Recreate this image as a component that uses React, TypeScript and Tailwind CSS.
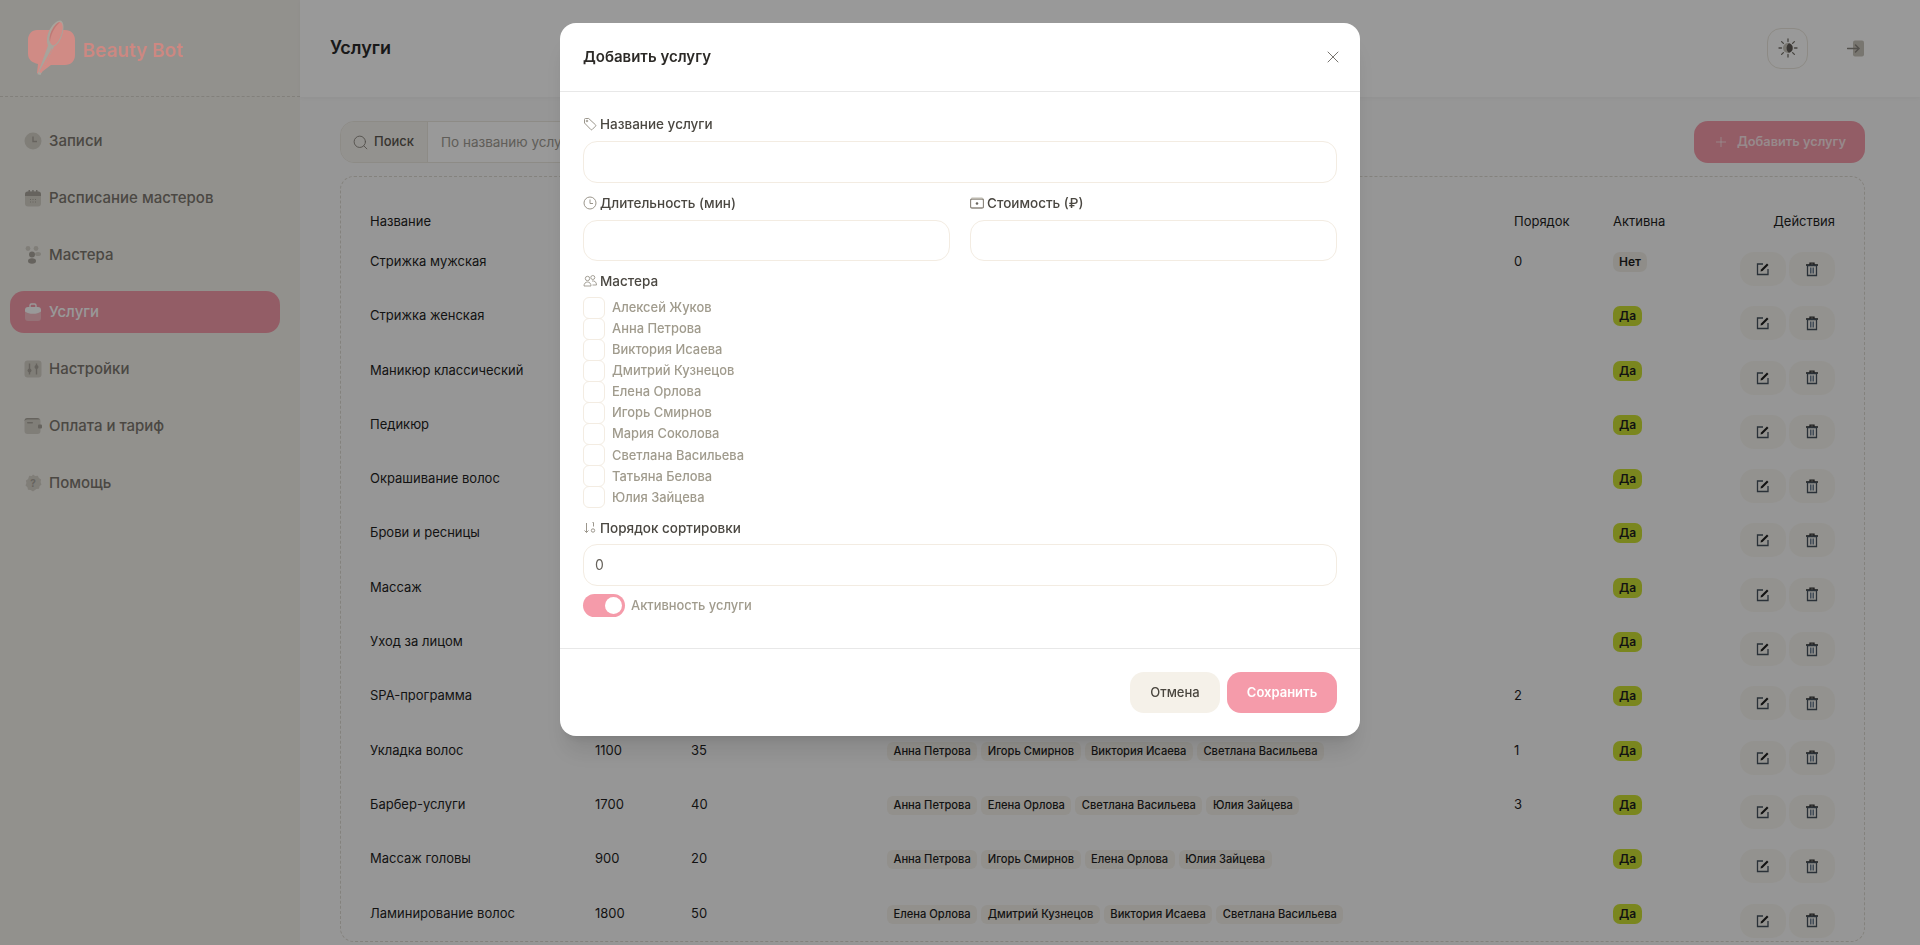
import type { ReactNode } from "react";
import { Plus, Search, X } from "lucide-react";

const font = { fontFamily: "Inter, 'Noto Sans', sans-serif" };

type Row = {
  name: string;
  price?: string;
  time?: string;
  masters?: string[];
  order?: string;
  active: boolean;
};

// первые строки закрыты модалкой, поэтому у них только видимые колонки
const rows: Row[] = [
  { name: "Стрижка мужская", order: "0", active: false },
  { name: "Стрижка женская", active: true },
  { name: "Маникюр классический", active: true },
  { name: "Педикюр", active: true },
  { name: "Окрашивание волос", active: true },
  { name: "Брови и ресницы", active: true },
  { name: "Массаж", active: true },
  { name: "Уход за лицом", active: true },
  { name: "SPA-программа", order: "2", active: true },
  { name: "Укладка волос", price: "1100", time: "35", masters: ["Анна Петрова", "Игорь Смирнов", "Виктория Исаева", "Светлана Васильева"], order: "1", active: true },
  { name: "Барбер-услуги", price: "1700", time: "40", masters: ["Анна Петрова", "Елена Орлова", "Светлана Васильева", "Юлия Зайцева"], order: "3", active: true },
  { name: "Массаж головы", price: "900", time: "20", masters: ["Анна Петрова", "Игорь Смирнов", "Елена Орлова", "Юлия Зайцева"], active: true },
  { name: "Ламинирование волос", price: "1800", time: "50", masters: ["Елена Орлова", "Дмитрий Кузнецов", "Виктория Исаева", "Светлана Васильева"], active: true },
];

const masterNames = [
  "Алексей Жуков",
  "Анна Петрова",
  "Виктория Исаева",
  "Дмитрий Кузнецов",
  "Елена Орлова",
  "Игорь Смирнов",
  "Мария Соколова",
  "Светлана Васильева",
  "Татьяна Белова",
  "Юлия Зайцева",
];

const NavIcon = ({ name, active }: { name: string; active?: boolean }) => {
  const a = active ? "#ffffff" : "#aaa69d";
  const b = active ? "#ffffff" : "#d6d2c9";
  if (name === "clock")
    return (
      <svg width="18" height="18" viewBox="0 0 18 18">
        <circle cx="9" cy="9" r="8.5" fill={b} />
        <path d="M9 4.5V9.5H13" fill="none" stroke={a} strokeWidth="1.4" />
      </svg>
    );
  if (name === "calendar")
    return (
      <svg width="18" height="18" viewBox="0 0 18 18">
        <rect x="1" y="2.5" width="16" height="15" rx="3" fill={b} />
        <path d="M1 7V5.5a3 3 0 0 1 3-3h10a3 3 0 0 1 3 3V7z" fill={a} />
        <rect x="4.5" y="1" width="1.5" height="3" fill={a} />
        <rect x="8.2" y="1" width="1.5" height="3" fill={a} />
        <rect x="12" y="1" width="1.5" height="3" fill={a} />
        <path d="M6 10.5h1M8.5 10.5h1M11 10.5h1M6 13h1M8.5 13h1M11 13h1" stroke={a} strokeWidth="1" />
      </svg>
    );
  if (name === "users")
    return (
      <svg width="18" height="18" viewBox="0 0 18 18">
        <circle cx="4" cy="2.5" r="2.4" fill={b} />
        <circle cx="12" cy="2.5" r="2.4" fill={b} />
        <ellipse cx="14" cy="8" rx="3" ry="2" fill={b} />
        <circle cx="8" cy="8.5" r="3" fill={a} />
        <ellipse cx="8" cy="15" rx="4" ry="2.8" fill={a} />
      </svg>
    );
  if (name === "bag")
    return (
      <svg width="18" height="18" viewBox="0 0 18 18">
        <rect x="1" y="5" width="16" height="13" rx="3" fill={a} opacity="0.35" />
        <path d="M1 7a3 3 0 0 1 3-3h10a3 3 0 0 1 3 3v1.5c-2 1.5-5 2.3-8 2.3s-6-.8-8-2.3z" fill={a} />
        <path d="M6 4V2.5A1.5 1.5 0 0 1 7.5 1h3A1.5 1.5 0 0 1 12 2.5V4" fill="none" stroke={a} strokeWidth="1.4" />
      </svg>
    );
  if (name === "sliders")
    return (
      <svg width="18" height="18" viewBox="0 0 18 18">
        <rect x="0.5" y="0.5" width="17" height="17" rx="3" fill={b} />
        <path d="M5.5 3.5v11M12.5 3.5v11" stroke={a} strokeWidth="1.4" />
        <circle cx="5.5" cy="10.5" r="2" fill={a} />
        <circle cx="12.5" cy="7" r="2" fill={a} />
      </svg>
    );
  if (name === "wallet")
    return (
      <svg width="18" height="18" viewBox="0 0 18 18">
        <rect x="0.5" y="1" width="16" height="16" rx="3" fill={b} />
        <rect x="3" y="5" width="6" height="1.4" rx="0.7" fill={a} />
        <rect x="14" y="7.5" width="4" height="4" rx="1" fill={a} />
        <path d="M0.5 4a3 3 0 0 1 3-3h10a3 3 0 0 1 2.5 1.5H3.5a3 3 0 0 0-3 1.5z" fill={a} />
      </svg>
    );
  return (
    <svg width="18" height="18" viewBox="0 0 18 18">
      <path d="M9 .5l2.2 1.4 2.6-.2 1.1 2.4 2.2 1.3-.5 2.6.9 2.4-1.9 1.8-.6 2.6-2.6.3L9 17.5l-2.4-1.4-2.6-.3-.6-2.6-1.9-1.8.9-2.4-.5-2.6 2.2-1.3L5.2 1.7l2.6.2z" fill={b} />
      <text x="9" y="13" textAnchor="middle" fontSize="10" fontWeight="700" fill={a} style={font}>?</text>
    </svg>
  );
};

const navItems = [
  { label: "Записи", icon: "clock" },
  { label: "Расписание мастеров", icon: "calendar" },
  { label: "Мастера", icon: "users" },
  { label: "Услуги", icon: "bag", active: true },
  { label: "Настройки", icon: "sliders" },
  { label: "Оплата и тариф", icon: "wallet" },
  { label: "Помощь", icon: "help" },
];

// логотип: облачко-сообщение и кисть поверх него
const Logo = () => (
  <svg width="50" height="56" viewBox="0 0 50 56" className="shrink-0">
    <path
      d="M10 10h28c6 0 10 4 10 10v15c0 6-4 10-10 10H24l-12 9-2-1 1-9c-5-1-10-4-10-10V20c0-6 4-10 9-10z"
      fill="#d08b85"
    />
    <path d="M33 .5c3.500 0 4.500 7 2.500 13.500-2 6.500-4.500 10.500-8.500 12.500L13.500 55l-3-.8L21 25.500c-2-4.500-1-10.500 1.500-15.500C25 5 29.500.5 33 .5z" fill="#a8a49c" />
    <path d="M33 2c3 .5 3.500 6 1.500 12-2 6-4.500 10-8 11.500-4-1-5-6-3-12C25.500 7.500 30 2 33 2z" fill="#d08b85" />
    <path d="M33 2c-3 0-7.500 5.500-9.500 11.500-1 3-1.200 6-.5 8 .5-6 4-14 10-19.500z" fill="#bd7a76" />
    <path d="M25 28L12 52l2.500 1 10.500-23z" fill="#d08b85" />
  </svg>
);

const Sidebar = () => (
  <aside className="w-[300px] shrink-0 bg-[#f4f2ec] flex flex-col">
    <div className="h-[97px] shrink-0 border-b border-dashed border-[#d9d6ce] pl-[27px] flex items-center">
      <div className="relative z-[60] flex items-center gap-[6px]">
        <Logo />
        <span className="text-[19px] font-semibold text-[#cd8882] mt-[6px]">Beauty Bot</span>
      </div>
    </div>
    <nav className="flex flex-col gap-[15px] pl-[10px] pr-[20px] pt-[23px]">
      {navItems.map((item) => (
        <div
          key={item.label}
          className={
            item.active
              ? "h-[42px] rounded-[14px] bg-[#f59baa] text-white font-medium flex items-center gap-[7px] pl-[14px] text-[15px]"
              : "h-[42px] rounded-[14px] text-[#7d7870] font-medium flex items-center gap-[7px] pl-[14px] text-[15px]"
          }
        >
          <NavIcon name={item.icon} active={item.active} />
          <span>{item.label}</span>
        </div>
      ))}
    </nav>
  </aside>
);

const ThemeIcon = () => (
  <svg width="20" height="20" viewBox="0 0 20 20">
    <path d="M10 1v2.500M10 16.500V19M1 10h2.500M16.500 10H19M3.600 3.600l1.800 1.800M14.600 14.600l1.800 1.800M3.600 16.400l1.800-1.800M14.600 5.400l1.800-1.800" stroke="#77736b" strokeWidth="1.300" strokeLinecap="round" />
    <circle cx="10" cy="10" r="5" fill="#c9c5bb" />
    <path d="M11 5.200a5 5 0 0 1 0 9.600c-1.600-1-2.400-2.900-2.400-4.800s.8-3.800 2.400-4.800z" fill="#5f5b55" />
  </svg>
);

const LogoutIcon = () => (
  <svg width="17" height="17" viewBox="0 0 17 17">
    <rect x="6" y="0.500" width="11" height="16" rx="2" fill="#c9c5bb" />
    <path d="M0.500 8.500h11M8.500 5L12 8.500 8.500 12" fill="none" stroke="#8b8780" strokeWidth="1.500" strokeLinecap="round" />
  </svg>
);

const Header = () => (
  <header className="h-[97px] shrink-0 bg-white flex items-center justify-between pl-[30px] pr-[56px] shadow-[0_1px_4px_rgba(0,0,0,0.04)]">
    <h1 className="text-[18px] font-semibold text-[#2a2a2a] -mt-[2px]">Услуги</h1>
    <div className="flex items-center gap-[39px] -mt-[1px]">
      <button className="w-[41px] h-[41px] rounded-[14px] border border-[#ebe7de] flex items-center justify-center">
        <ThemeIcon />
      </button>
      <LogoutIcon />
    </div>
  </header>
);

const Toolbar = () => (
  <div className="flex items-center justify-between">
    <div className="flex h-[42px] w-[760px] rounded-[14px] border border-[#ebe8df] overflow-hidden text-[13.500px]">
      <div className="w-[87px] bg-[#f5f3ee] border-r border-[#ebe8df] flex items-center gap-[5px] pl-[11px] font-medium text-[13px] text-[#5c5850]">
        <Search size={17} strokeWidth={1.300} className="text-[#8b8780]" />
        Поиск
      </div>
      <div className="flex-1 bg-white flex items-center pl-[13px] text-[#a09c94]">По названию услуги</div>
    </div>
    <button className="w-[171px] h-[42px] rounded-[14px] bg-[#f59baa] text-white/75 font-semibold text-[12.800px] flex items-center justify-center gap-[8px]">
      <Plus size={16} strokeWidth={1.300} />
      Добавить услугу
    </button>
  </div>
);

const EditIcon = () => (
  <svg width="14" height="14" viewBox="0 0 14 14">
    <path d="M7 2H1.500v10.500H12V7" fill="none" stroke="#46525e" strokeWidth="1.300" />
    <path d="M5 7.500L11 1.500l1.500 1.500-6 6L4.500 9.500z" fill="#1f1f1f" />
  </svg>
);

const TrashIcon = () => (
  <svg width="14" height="15" viewBox="0 0 14 15">
    <path d="M1 3h12M5 3V1.200h4V3" fill="none" stroke="#2f2f2f" strokeWidth="1.300" />
    <path d="M2.500 3.500h9v10h-9z" fill="none" stroke="#46525e" strokeWidth="1.300" />
    <path d="M5.500 5.500v6M7 5.500v6M8.500 5.500v6" stroke="#5b7186" strokeWidth="0.900" />
  </svg>
);

const ServiceTable = () => (
  <div className="mt-[13px] rounded-[14px] border border-dashed border-[#dcd9d1] pl-[29px] pr-[29px] pt-[32px]">
    <table className="w-full table-fixed text-[13px] text-[#1f1f1f]">
      <thead>
        <tr className="h-[26px] text-left">
          <th className="w-[225px] font-normal p-0">Название</th>
          <th className="w-[96px] font-normal p-0"></th>
          <th className="w-[196px] font-normal p-0"></th>
          <th className="w-[627px] font-normal p-0"></th>
          <th className="w-[99px] font-normal p-0">Порядок</th>
          <th className="w-[91px] font-normal p-0">Активна</th>
          <th className="font-normal p-0 text-right">Действия</th>
        </tr>
      </thead>
      <tbody>
        {rows.map((row) => (
          <tr key={row.name} className="h-[54.300px] align-top">
            <td className="p-0 pt-[17px]">{row.name}</td>
            <td className="p-0 pt-[17px]">{row.price}</td>
            <td className="p-0 pt-[17px]">{row.time}</td>
            <td className="p-0 pt-[18px]">
              <div className="flex gap-[4px]">
                {row.masters?.map((m) => (
                  <span key={m} className="h-[19px] px-[6.500px] rounded-[6px] bg-[#f3f0e9] text-[11.150px] font-medium flex items-center whitespace-nowrap">
                    {m}
                  </span>
                ))}
              </div>
            </td>
            <td className="p-0 pt-[17px]">{row.order}</td>
            <td className="p-0 pt-[17px]">
              <span
                className={
                  row.active
                    ? "inline-flex items-center h-[20px] px-[6px] rounded-[7px] bg-[#cce034] text-[12px] font-semibold"
                    : "inline-flex items-center h-[20px] px-[6px] rounded-[7px] bg-[#efece5] text-[12px] font-semibold"
                }
              >
                {row.active ? "Да" : "Нет"}
              </span>
            </td>
            <td className="p-0 pt-[17px]">
              <div className="flex justify-end gap-[3px]">
                <button className="w-[46px] h-[34px] rounded-[14px] bg-[#f6f4ef] flex items-center justify-center">
                  <EditIcon />
                </button>
                <button className="w-[46px] h-[34px] rounded-[14px] bg-[#f6f4ef] flex items-center justify-center">
                  <TrashIcon />
                </button>
              </div>
            </td>
          </tr>
        ))}
      </tbody>
    </table>
  </div>
);

const TagIcon = () => (
  <svg width="14" height="14" viewBox="0 0 14 14" fill="none" stroke="#9b968c" strokeWidth="1">
    <path d="M1.500 2.500a1 1 0 0 1 1-1h3.200l6.800 6.300a1 1 0 0 1 0 1.400l-3.300 3.300a1 1 0 0 1-1.400 0L1.500 6z" />
    <circle cx="4" cy="4" r="0.800" />
  </svg>
);
const ClockIcon = () => (
  <svg width="14" height="14" viewBox="0 0 14 14" fill="none" stroke="#9b968c" strokeWidth="1">
    <circle cx="7" cy="7" r="6" />
    <path d="M7 3.500V7.500H10" />
  </svg>
);
const MoneyIcon = () => (
  <svg width="14" height="14" viewBox="0 0 14 14">
    <rect x="0.500" y="3" width="13" height="9" rx="1.500" fill="none" stroke="#8d887f" strokeWidth="1.300" />
    <path d="M1.500 1.500h11v1.500h-11z" fill="#bcb8ae" />
    <circle cx="7" cy="7.500" r="1.300" fill="#6a665f" />
  </svg>
);
const PeopleIcon = () => (
  <svg width="14" height="14" viewBox="0 0 14 14" fill="none" stroke="#9b968c" strokeWidth="0.900">
    <circle cx="4.500" cy="4.500" r="2.200" />
    <circle cx="9.800" cy="3.500" r="2" />
    <path d="M1 12c0-2.500 1.500-4 3.500-4S8 9.500 8 12zM9 7c2.500-.5 4.500 1 4.500 4H9.500" />
  </svg>
);
const SortIcon = () => (
  <svg width="14" height="14" viewBox="0 0 14 14">
    <path d="M3.500 2v9.500M1.500 9.500l2 2 2-2" fill="none" stroke="#9b968c" strokeWidth="1" />
    <path d="M9.500 1.500h1v4" fill="none" stroke="#9b968c" strokeWidth="1" />
    <circle cx="10" cy="9.500" r="1.700" fill="none" stroke="#9b968c" strokeWidth="1" />
  </svg>
);

const FieldLabel = ({ icon, text }: { icon: ReactNode; text: string }) => (
  <label className="flex items-center gap-[3px] h-[20px] text-[13.500px] font-medium text-[#4a4741]">
    {icon}
    {text}
  </label>
);

const Field = ({ tall, value }: { tall?: boolean; value?: string }) => (
  <div
    className={
      tall
        ? "h-[42px] w-full rounded-[14px] border border-[#f3ece2] bg-white flex items-center pl-[11px] text-[14px] text-[#66625b]"
        : "h-[41px] w-full rounded-[14px] border border-[#f3ece2] bg-white flex items-center pl-[11px] text-[14px] text-[#66625b]"
    }
  >
    {value}
  </div>
);

const Modal = () => (
  <div className="fixed inset-0 z-50 bg-black/40 flex justify-center items-start pt-[23px]">
    <div className="w-[800px] h-[713px] bg-white rounded-[16px] flex flex-col shadow-xl">
      <div className="h-[69px] shrink-0 border-b border-[#e8e8e8] flex items-center justify-between pl-[23px] pr-[17px]">
        <h2 className="text-[15px] font-semibold text-[#2c2a27]">Добавить услугу</h2>
        <X size={20} strokeWidth={1} className="text-[#5c5850]" />
      </div>
      <div className="flex-1 px-[23px] pt-[22px] flex flex-col">
        <FieldLabel icon={<TagIcon />} text="Название услуги" />
        <div className="mt-[7px]"><Field tall /></div>
        <div className="mt-[10px] flex gap-[20px]">
          <div className="flex-1">
            <FieldLabel icon={<ClockIcon />} text="Длительность (мин)" />
            <div className="mt-[7px]"><Field /></div>
          </div>
          <div className="flex-1">
            <FieldLabel icon={<MoneyIcon />} text="Стоимость (₽)" />
            <div className="mt-[7px]"><Field /></div>
          </div>
        </div>
        <div className="mt-[10px]">
          <FieldLabel icon={<PeopleIcon />} text="Мастера" />
        </div>
        <div className="mt-[6px] flex flex-col">
          {masterNames.map((m) => (
            <div key={m} className="h-[21.100px] flex items-center gap-[7px] text-[12.900px] font-medium text-[#a09b8d]">
              <span className="w-[22px] h-[22px] shrink-0 rounded-[6px] border border-[#f3ece2] bg-white" />
              {m}
            </div>
          ))}
        </div>
        <div className="mt-[10px]">
          <FieldLabel icon={<SortIcon />} text="Порядок сортировки" />
        </div>
        <div className="mt-[6px]"><Field tall value="0" /></div>
        <div className="mt-[8px] flex items-center gap-[6px]">
          <span className="w-[42px] h-[23px] rounded-full bg-[#f59baa] flex items-center justify-end pr-[3px]">
            <span className="w-[17px] h-[17px] rounded-full bg-white" />
          </span>
          <span className="text-[12.900px] font-medium text-[#a09b8d]">Активность услуги</span>
        </div>
      </div>
      <div className="h-[88px] shrink-0 border-t border-[#e8e8e8] flex justify-end gap-[7px] pt-[23px] pr-[23px]">
        <button className="w-[90px] h-[41px] rounded-[14px] bg-[#f5f1e9] text-[13px] font-medium text-[#4a463f]">Отмена</button>
        <button className="w-[110px] h-[41px] rounded-[14px] bg-[#f59baa] text-[13px] font-semibold text-white">Сохранить</button>
      </div>
    </div>
  </div>
);

export default function App() {
  return (
    <div className="h-screen overflow-hidden flex bg-[#fafafa]" style={font}>
      <Sidebar />
      <div className="flex-1 flex flex-col min-w-0">
        <Header />
        <main className="pt-[24px] pl-[40px] pr-[55px]">
          <Toolbar />
          <ServiceTable />
        </main>
      </div>
      <Modal />
    </div>
  );
}
